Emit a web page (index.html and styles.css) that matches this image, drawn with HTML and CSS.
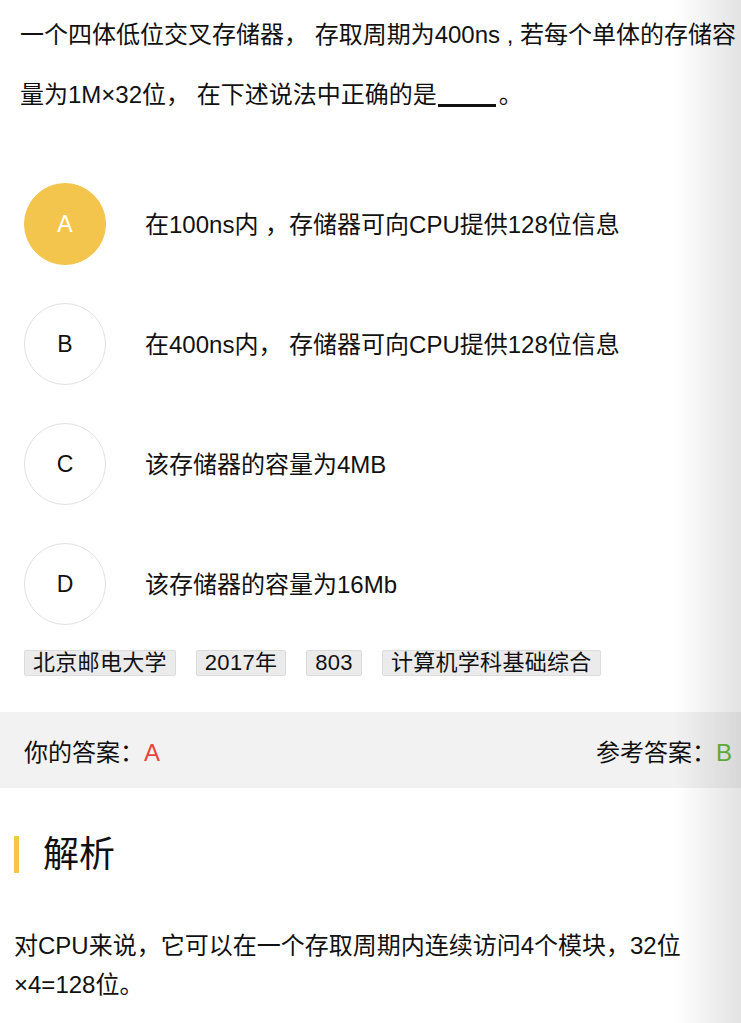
FILE: index.html
```html
<!DOCTYPE html>
<html>
<head>
    <meta charset="UTF-8">
    <title>题目详情</title>
    <link rel="stylesheet" href="styles.css">
</head>
<body>
    <!-- 题干 -->
    <div class="question">一个四体低位交叉存储器， 存取周期为400ns , 若每个单体的存储容量为1M×32位， 在下述说法中正确的是<span class="blank"></span><span class="stop">。</span></div>

    <!-- 选项 -->
    <div class="options">
        <div class="option">
            <div class="option-letter chosen">A</div>
            <div class="option-text">在100ns内 ，存储器可向CPU提供128位信息</div>
        </div>
        <div class="option">
            <div class="option-letter">B</div>
            <div class="option-text">在400ns内， 存储器可向CPU提供128位信息</div>
        </div>
        <div class="option">
            <div class="option-letter">C</div>
            <div class="option-text">该存储器的容量为4MB</div>
        </div>
        <div class="option">
            <div class="option-letter">D</div>
            <div class="option-text">该存储器的容量为16Mb</div>
        </div>
    </div>

    <div class="tags">
        <span class="tag">北京邮电大学</span>
        <span class="tag">2017年</span>
        <span class="tag">803</span>
        <span class="tag">计算机学科基础综合</span>
    </div>

    <div class="answer-bar">
        <div>你的答案：<span class="wrong">A</span></div>
        <div>参考答案：<span class="right">B</span></div>
    </div>

    <!-- 解析 -->
    <div class="analysis">
        <h2 class="analysis-title">解析</h2>
        <p class="analysis-text">对CPU来说，它可以在一个存取周期内连续访问4个模块，32位×4=128位。</p>
    </div>

    <div class="edge-shade"></div>
</body>
</html>
```

FILE: styles.css
```css
body {
    margin: 0;
    padding: 0;
    background-color: #fff;
    color: #111;
    font-family: "Liberation Sans", "Noto Sans CJK SC", sans-serif;
    font-size: 24px;
    overflow: hidden;
}

.question {
    padding: 5px 0 0 20px;
    line-height: 60px;
}

.blank {
    display: inline-block;
    width: 58px;
    height: 18px;
    border-bottom: 3px solid #111;
    margin-left: 1px;
    vertical-align: -4px;
}

.stop {
    margin-left: 3px;
}

.options {
    margin-top: 58px;
    padding-left: 24px;
}

.option {
    display: flex;
    align-items: center;
    margin-bottom: 38px;
}

.option:last-child {
    margin-bottom: 0;
}

.option-letter {
    width: 80px;
    height: 80px;
    border: 1px solid #e0e0e0;
    border-radius: 50%;
    display: flex;
    justify-content: center;
    align-items: center;
    font-size: 23px;
    color: #111;
    flex-shrink: 0;
}

.option-letter.chosen {
    background-color: #f4c54c;
    border-color: #f4c54c;
    color: #fff;
}

.option-text {
    margin-left: 39px;
    margin-top: -3px;
}

.tags {
    display: flex;
    gap: 20px;
    padding-left: 24px;
    margin-top: 25px;
}

.tag {
    font-size: 22px;
    line-height: 24px;
    padding: 0 8px;
    letter-spacing: 0.3px;
    background-color: #ebebeb;
    border: 1px solid #dcdcdc;
    border-radius: 2px;
}

.answer-bar {
    margin-top: 36px;
    height: 76px;
    background-color: #f2f2f2;
    display: flex;
    justify-content: space-between;
    align-items: center;
    padding: 0 9px 0 24px;
}

.wrong {
    color: #e8453c;
}

.right {
    color: #67b83a;
}

.analysis {
    padding: 0 14px;
}

.analysis-title {
    margin: 48px 0 0;
    border-left: 5px solid #f4c54c;
    padding-left: 24px;
    font-size: 36px;
    font-weight: normal;
    line-height: 37px;
}

.analysis-text {
    margin: 53px 0 0;
    line-height: 39px;
}

.edge-shade {
    position: fixed;
    top: 0;
    right: 0;
    width: 66px;
    height: 100%;
    background: linear-gradient(to right, rgba(0, 0, 0, 0), rgba(0, 0, 0, 0.11));
    pointer-events: none;
}
```
